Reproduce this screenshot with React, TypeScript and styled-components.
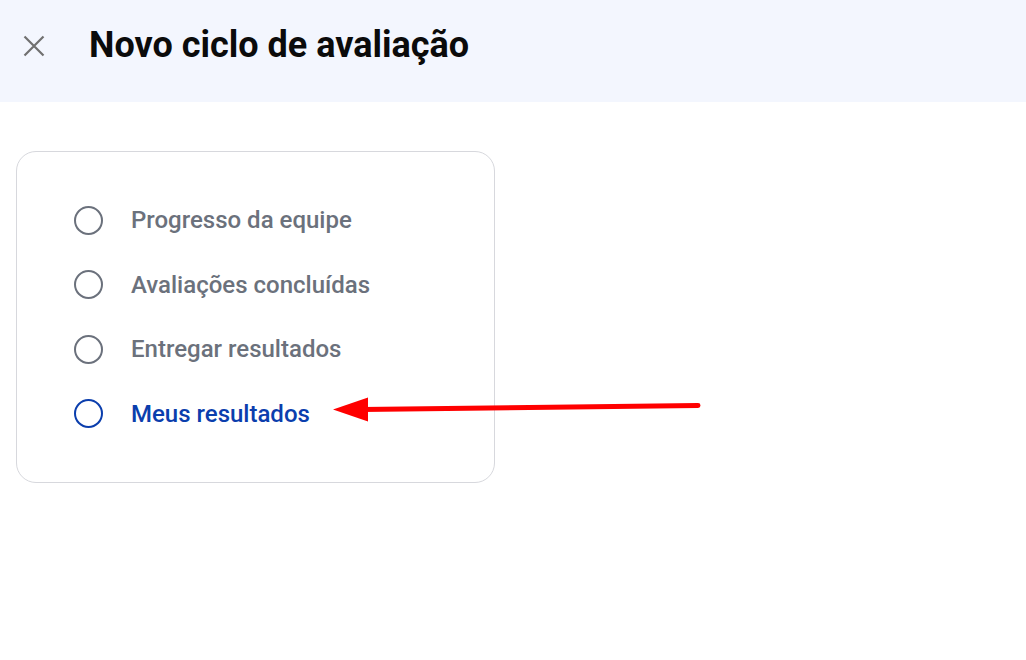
import React from "react";
import styled, { createGlobalStyle } from "styled-components";

const Global = createGlobalStyle`
  html, body { margin: 0; padding: 0; background: #ffffff; }
  body { font-family: Roboto, "Noto Sans", sans-serif; -webkit-font-smoothing: antialiased; }
`;

const Page = styled.div`
  position: relative;
  width: 1026px;
  height: 660px;
  overflow: hidden;
  background: #ffffff;
`;

const Header = styled.header`
  height: 102px;
  background: #f3f6fe;
  display: flex;
  align-items: center;
  padding: 0 0 12px 23px;
  box-sizing: border-box;
`;

const CloseButton = styled.button`
  width: 22px;
  height: 22px;
  padding: 0;
  border: none;
  background: transparent;
  display: flex;
  align-items: center;
  justify-content: center;
  margin-right: 44px;
  margin-top: 2px;
  cursor: pointer;
`;

const Title = styled.h1`
  margin: 0;
  font-family: Roboto, sans-serif;
  font-weight: 700;
  font-size: 36px;
  line-height: 42px;
  color: #0b0b0b;
  letter-spacing: 0;
`;

const Main = styled.main`
  padding: 49px 16px 0;
`;

const Card = styled.div`
  width: 479px;
  height: 332px;
  box-sizing: border-box;
  border: 1px solid #d7d8dd;
  border-radius: 20px;
  padding: 36px 0 36px 57px;
  display: flex;
  flex-direction: column;
`;

const Row = styled.div<{ $active?: boolean }>`
  height: 64.5px;
  display: flex;
  align-items: center;
  gap: 28px;
  color: ${(p) => (p.$active ? "#0b3ead" : "#6b717c")};
`;

const Radio = styled.span<{ $active?: boolean }>`
  width: 29px;
  height: 29px;
  box-sizing: border-box;
  border-radius: 50%;
  border: 2.6px solid ${(p) => (p.$active ? "#0b3ead" : "#6b717c")};
  flex: none;
`;

const Label = styled.span`
  font-family: Roboto, sans-serif;
  font-size: 24px;
  font-weight: 500;
  line-height: 28px;
`;

const Overlay = styled.svg`
  position: absolute;
  left: 0;
  top: 0;
  pointer-events: none;
`;

const items = [
  { label: "Progresso da equipe" },
  { label: "Avaliações concluídas" },
  { label: "Entregar resultados" },
  { label: "Meus resultados", active: true },
];

export default function App() {
  return (
    <Page>
      <Global />
      <Header>
        <CloseButton aria-label="Fechar">
          <svg width="22" height="22" viewBox="0 0 22 22">
            <path d="M1.5 1.5 L20.5 20.5 M20.5 1.5 L1.5 20.5" stroke="#707070" strokeWidth="2.2" strokeLinecap="butt" />
          </svg>
        </CloseButton>
        <Title>Novo ciclo de avaliação</Title>
      </Header>
      <Main>
        <Card>
          {items.map((it) => (
            <Row key={it.label} $active={it.active}>
              <Radio $active={it.active} />
              <Label>{it.label}</Label>
            </Row>
          ))}
        </Card>
      </Main>
      <Overlay width="1026" height="660" viewBox="0 0 1026 660">
        <line x1="698" y1="405.5" x2="362" y2="409.5" stroke="#ff0000" strokeWidth="5" strokeLinecap="round" />
        <polygon points="333,409.5 368,397.5 368,421.5" fill="#ff0000" />
      </Overlay>
    </Page>
  );
}
